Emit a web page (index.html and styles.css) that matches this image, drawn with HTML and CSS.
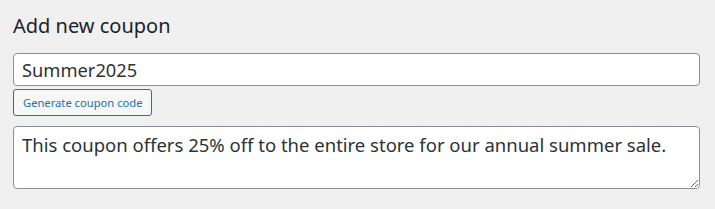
FILE: index.html
```html
<!DOCTYPE html>
<html lang="en">
<head>
  <meta charset="UTF-8">
  <title>Add new coupon</title>
  <link rel="stylesheet" href="styles.css">
</head>
<body>
  <div class="coupon-box">
    <h2 class="coupon-title">Add new coupon</h2>
    <input type="text" class="coupon-code" value="Summer2025">
    <button type="button" class="generate-button">Generate coupon code</button>
    <textarea class="coupon-description">This coupon offers 25% off to the entire store for our annual summer sale.</textarea>
  </div>
</body>
</html>
```

FILE: styles.css
```css
* {
  margin: 0;
  padding: 0;
  box-sizing: border-box;
}

body {
  font-family: 'Noto Sans', 'Open Sans', Arial, sans-serif;
  background: #f0f0f1;
  color: #1d2327;
}

.coupon-box {
  display: flex;
  flex-direction: column;
  align-items: flex-start;
  padding: 12px 15px 0 13px;
}

.coupon-title {
  font-size: 20px;
  font-weight: 400;
  line-height: 28px;
  margin-bottom: 13px;
}

.coupon-code {
  width: 100%;
  height: 33px;
  padding: 0 8px;
  font-family: inherit;
  font-size: 18.3px;
  color: #2c3338;
  background: #ffffff;
  border: 1px solid #8c8f94;
  border-radius: 4px;
  outline: none;
}

.generate-button {
  margin-top: 3px;
  height: 27px;
  padding: 0 9px;
  font-family: inherit;
  font-size: 11.2px;
  color: #2271b1;
  background: #f6f7f7;
  border: 1px solid #2271b1;
  border-radius: 3px;
  cursor: pointer;
}

.coupon-description {
  width: 100%;
  height: 63px;
  margin-top: 10px;
  padding: 5px 8px;
  font-family: inherit;
  font-size: 18.5px;
  line-height: 26px;
  color: #2c3338;
  background: #ffffff;
  border: 1px solid #8c8f94;
  border-radius: 4px;
  outline: none;
  resize: vertical;
}
```
